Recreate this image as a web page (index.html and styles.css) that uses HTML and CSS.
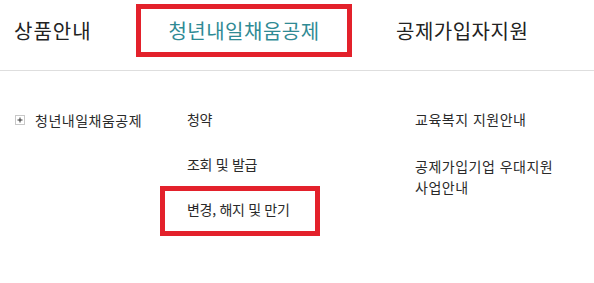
FILE: index.html
```
<!DOCTYPE html>
<html lang="ko">
<head>
    <meta charset="UTF-8">
    <title>청년내일채움공제</title>
    <link rel="stylesheet" href="styles.css">
</head>
<body>
    <div class="gnb">
        <div class="gnb-item gnb-first">상품안내</div>
        <div class="gnb-item gnb-active marked">청년내일채움공제</div>
        <div class="gnb-item gnb-last">공제가입자지원</div>
    </div>

    <div class="sub-menu">
        <div class="col col-title">
            <svg class="plus" width="10" height="10" viewBox="0 0 10 10">
                <rect x="0.5" y="0.5" width="9" height="9" fill="#fff" stroke="#c8c8c8"/>
                <path d="M2.5 5h5M5 2.5v5" stroke="#333" stroke-width="1"/>
            </svg>
            <span>청년내일채움공제</span>
        </div>
        <ul class="col col-links">
            <li>청약</li>
            <li>조회 및 발급</li>
            <li class="boxed">변경, 해지 및 만기</li>
        </ul>
        <ul class="col col-links col-extra">
            <li>교육복지 지원안내</li>
            <li class="two-line">공제가입기업 우대지원<br>사업안내</li>
        </ul>
    </div>
</body>
</html>
```

FILE: styles.css
```
* {
    margin: 0;
    padding: 0;
    box-sizing: border-box;
}

body {
    font-family: "Noto Sans CJK KR", "Noto Sans", sans-serif;
    background: #fff;
    color: #2a2a2a;
    width: 594px;
    height: 283px;
    overflow: hidden;
}

/* 상단 메뉴 */
.gnb {
    display: flex;
    align-items: flex-start;
    height: 71px;
    padding-top: 4px;
    border-bottom: 1px solid #dedede;
}

.gnb-item {
    font-size: 20px;
    line-height: 53px;
    color: #222;
    white-space: nowrap;
    flex-shrink: 0;
    letter-spacing: 0.5px;
}

.gnb-first {
    width: 136px;
    padding-left: 14px;
    letter-spacing: 1px;
}

.gnb-active {
    width: 216px;
    height: 53px;
    line-height: 43px;
    text-align: center;
    color: #2f8a94;
}

.gnb-last {
    margin-left: 44px;
}

/* 빨간 표시 박스 */
.marked {
    border: 5px solid #e3212b;
}

/* 하위 메뉴 */
.sub-menu {
    display: flex;
    padding: 26px 0 0 15px;
}

.col {
    list-style: none;
    font-size: 14px;
    flex-shrink: 0;
}

.col-title {
    width: 172px;
    display: flex;
    align-items: center;
    height: 45px;
    letter-spacing: 0.5px;
}

.col-title .plus {
    display: block;
    margin-right: 10px;
}

.col-links {
    width: 228px;
    letter-spacing: -0.3px;
}

.col-links li {
    position: relative;
    padding: 12px 0;
    line-height: 21px;
    white-space: nowrap;
}

.col-links li.boxed::after {
    content: "";
    position: absolute;
    left: -27px;
    top: -1px;
    width: 160px;
    height: 50px;
    box-sizing: border-box;
    border: 5px solid #e3212b;
}

.col-extra {
    width: auto;
    flex: 1;
    letter-spacing: 0.5px;
}

.col-extra li.two-line {
    padding-top: 14px;
}
```
